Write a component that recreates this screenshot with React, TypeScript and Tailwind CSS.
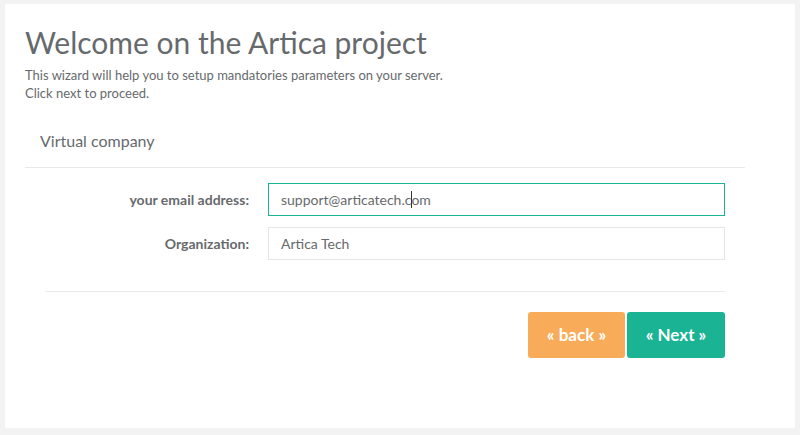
import React from "react";

const App = () => {
  return (
    <div className="w-[800px] h-[435px] bg-[#f3f3f3] pt-[4px] px-[5px] pb-[7px] font-['Lato',sans-serif] text-[#676a6c]">
      <div className="h-full bg-white px-[20px] pt-[20px]">
        <h1 className="text-[30px] leading-[36px] font-normal">Welcome on the Artica project</h1>
        <p className="mt-[6px] text-[13px] leading-[18px]">
          This wizard will help you to setup mandatories parameters on your server.
          <br />
          Click next to proceed.
        </p>

        <section className="w-[720px] mt-[16px]">
          <div className="h-[50px] pl-[15px] pt-[12px] border-b border-[#e7eaec] text-[16px] leading-[22px]">
            Virtual company
          </div>

          <div className="flex flex-col gap-[11px] pt-[15px]">
            <div className="flex items-center">
              <label className="w-[224px] text-right text-[14px] font-bold">your email address:</label>
              <div className="ml-[19px] w-[457px] h-[33px] border border-[#1ab394] pl-[12px] flex items-center text-[14px]">
                <span>support@articatech.c</span>
                <span className="w-px h-[17px] bg-[#333] -mx-[0.5px]"></span>
                <span>om</span>
              </div>
            </div>
            <div className="flex items-center">
              <label className="w-[224px] text-right text-[14px] font-bold">Organization:</label>
              <div className="ml-[19px] w-[457px] h-[33px] border border-[#e5e6e7] pl-[12px] flex items-center text-[14px]">
                Artica Tech
              </div>
            </div>
          </div>

          <div className="ml-[20px] w-[680px] mt-[31px] border-t border-[#e7eaec]"></div>

          <div className="flex justify-end gap-[2px] pr-[20px] mt-[20px]">
            <button className="w-[97px] h-[46px] rounded-[3px] bg-[#f8ac59] text-white text-[17px] font-bold">
              « back »
            </button>
            <button className="w-[98px] h-[46px] rounded-[3px] bg-[#1ab394] text-white text-[17px] font-bold">
              « Next »
            </button>
          </div>
        </section>
      </div>
    </div>
  );
};

export default App;
